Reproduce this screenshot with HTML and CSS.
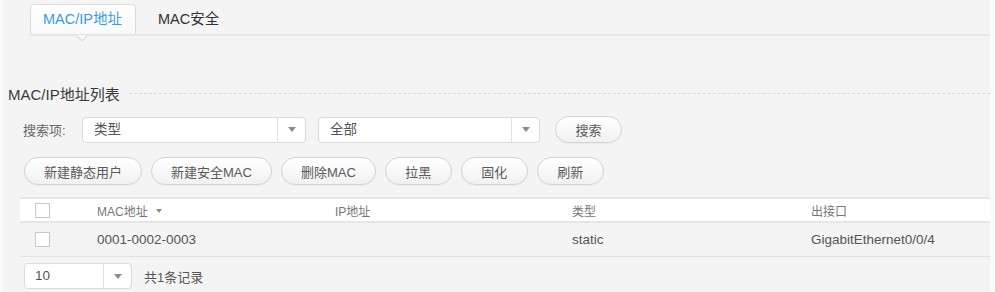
FILE: index.html
```html
<!DOCTYPE html>
<html>
<head>
<meta charset="utf-8">
<link rel="stylesheet" href="styles.css">
</head>
<body>
<div class="page">
  <div class="tabs">
    <div class="tab active">MAC/IP地址</div>
    <div class="tab">MAC安全</div>
  </div>

  <div class="section-title">
    <span>MAC/IP地址列表</span>
    <div class="dash"></div>
  </div>

  <div class="search-row">
    <span class="label">搜索项:</span>
    <div class="select wide1">
      <span class="sel-text">类型</span>
      <span class="sel-arrow"><i class="tri"></i></span>
    </div>
    <div class="select wide2">
      <span class="sel-text">全部</span>
      <span class="sel-arrow"><i class="tri"></i></span>
    </div>
    <button class="btn search">搜索</button>
  </div>

  <div class="btn-row">
    <button class="btn">新建静态用户</button>
    <button class="btn">新建安全MAC</button>
    <button class="btn">删除MAC</button>
    <button class="btn">拉黑</button>
    <button class="btn">固化</button>
    <button class="btn">刷新</button>
  </div>

  <div class="table">
    <div class="thead">
      <div class="cell chk"><span class="checkbox"></span></div>
      <div class="cell">MAC地址 <i class="tri small"></i></div>
      <div class="cell">IP地址</div>
      <div class="cell">类型</div>
      <div class="cell">出接口</div>
    </div>
    <div class="trow">
      <div class="cell chk"><span class="checkbox"></span></div>
      <div class="cell">0001-0002-0003</div>
      <div class="cell"></div>
      <div class="cell">static</div>
      <div class="cell">GigabitEthernet0/0/4</div>
    </div>
  </div>

  <div class="pager">
    <div class="select page-size">
      <span class="sel-text">10</span>
      <span class="sel-arrow"><i class="tri"></i></span>
    </div>
    <span class="total">共1条记录</span>
  </div>
</div>
</body>
</html>
```

FILE: styles.css
```css
html, body {
  margin: 0;
  padding: 0;
}
body {
  background: #fafafa;
  font-family: "Liberation Sans", "Noto Sans CJK SC", sans-serif;
  color: #555;
  width: 995px;
  height: 292px;
  overflow: hidden;
}
.page {
  margin-left: 3px;
  width: 987px;
  height: 292px;
  background: #f4f4f4;
}

/* tabs */
.tabs {
  display: flex;
  align-items: flex-end;
  padding-top: 4px;
  margin-left: 27px;
  height: 30px;
  border-bottom: 2px solid #e6e6e6;
}
.tab {
  font-size: 14.5px;
  color: #333;
  height: 30px;
  line-height: 30px;
  padding: 0 12px;
  box-sizing: border-box;
  position: relative;
  white-space: nowrap;
}
.tab.active {
  width: 106px;
  padding: 0 0 0 12px;
  color: #3a9be0;
  border: 1px solid #dcdcdc;
  border-bottom: none;
  border-radius: 4px 4px 0 0;
  background: linear-gradient(#ffffff, #f8f8f8);
  line-height: 28px;
  margin-right: 10px;
}
.tab.active::before {
  content: "";
  position: absolute;
  left: 45px;
  bottom: -8px;
  border-left: 6px solid transparent;
  border-right: 6px solid transparent;
  border-top: 6px solid #dedede;
}
.tab.active::after {
  content: "";
  position: absolute;
  left: 46px;
  bottom: -6px;
  border-left: 5px solid transparent;
  border-right: 5px solid transparent;
  border-top: 5px solid #f8f8f8;
}

/* section title */
.section-title {
  display: flex;
  align-items: center;
  margin-top: 47px;
  padding-left: 5px;
  height: 20px;
  font-size: 15px;
  color: #3a3a3a;
  white-space: nowrap;
}
.section-title .dash {
  flex: 1;
  margin-left: 9px;
  border-top: 1px dashed #dadada;
}

/* search row */
.search-row {
  display: flex;
  align-items: center;
  margin-top: 13px;
  padding-left: 20px;
  height: 27px;
}
.label {
  font-size: 13px;
  color: #666;
  width: 59px;
}
.select {
  display: flex;
  align-items: stretch;
  height: 26px;
  box-sizing: border-box;
  background: #fff;
  border: 1px solid #dadada;
  border-radius: 4px;
}
.wide1 { width: 224px; }
.wide2 { width: 222px; margin-left: 12px; }
.sel-text {
  flex: 1;
  padding-left: 11px;
  font-size: 13.5px;
  line-height: 24px;
  color: #555;
}
.sel-arrow {
  width: 27px;
  border-left: 1px solid #e2e2e2;
  display: flex;
  align-items: center;
  justify-content: center;
}
.tri {
  display: inline-block;
  width: 0;
  height: 0;
  border-left: 4px solid transparent;
  border-right: 4px solid transparent;
  border-top: 5px solid #8a8a8a;
}
.tri.small {
  border-left-width: 3.5px;
  border-right-width: 3.5px;
  border-top-width: 4px;
  margin-left: 5px;
  vertical-align: middle;
  position: relative;
  top: -1px;
}

/* buttons */
.btn {
  font-family: "Liberation Sans", "Noto Sans CJK SC", sans-serif;
  font-size: 13px;
  color: #5a5a5a;
  height: 28px;
  min-width: 67px;
  padding: 0 19px;
  border: 1px solid #d4d4d4;
  border-radius: 14px;
  background: linear-gradient(#ffffff, #f1f1f1);
  box-shadow: 0 1px 1px rgba(0,0,0,0.04);
  cursor: pointer;
}
.btn.search {
  margin-left: 15px;
  width: 67px;
  height: 27px;
  padding: 0;
}
.btn-row {
  display: flex;
  gap: 9px;
  margin-top: 14px;
  padding-left: 21px;
}

/* table */
.table {
  margin-top: 12px;
  margin-left: 17px;
}
.thead, .trow {
  display: grid;
  grid-template-columns: 77px 238px 237px 239px 1fr;
  align-items: center;
}
.thead {
  height: 22px;
  background: #fff;
  border-top: 2px solid #e6e6e6;
  border-bottom: 2px solid #e6e6e6;
  font-size: 12px;
  color: #777;
}
.trow {
  height: 33px;
  border-bottom: 1px solid #e2e2e2;
  font-size: 13.5px;
  color: #555;
}
.cell.chk {
  padding-left: 15px;
  display: flex;
  align-items: center;
}
.checkbox {
  display: inline-block;
  width: 15px;
  height: 15px;
  box-sizing: border-box;
  border: 1px solid #c8c8c8;
  background: #fff;
}

/* pager */
.pager {
  display: flex;
  align-items: center;
  margin-top: 6px;
  padding-left: 21px;
}
.page-size { width: 108px; }
.page-size .sel-text { padding-left: 10px; }
.total {
  margin-left: 12px;
  font-size: 13px;
  color: #555;
}
```
